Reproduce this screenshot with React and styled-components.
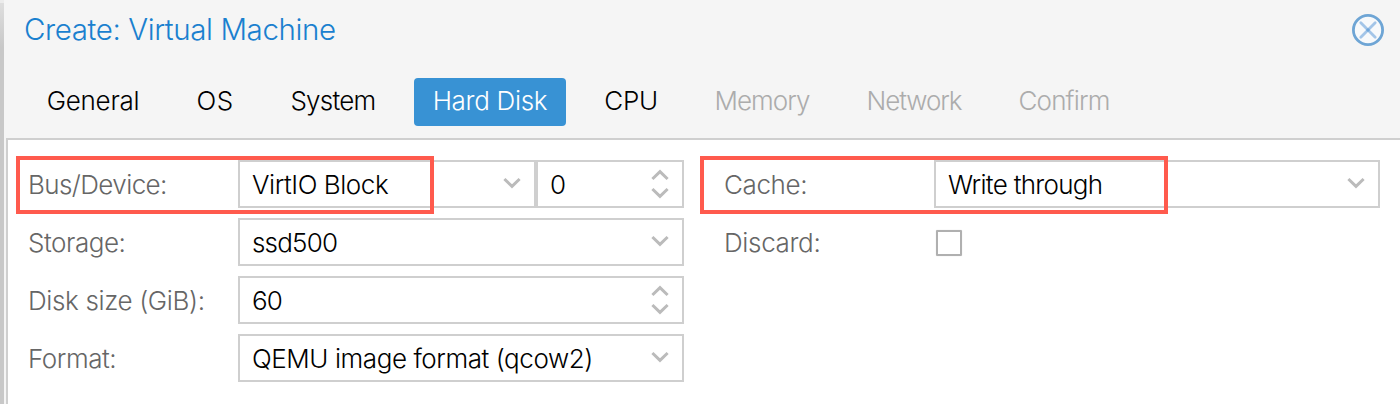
import React from "react";
import styled, { createGlobalStyle } from "styled-components";

const GlobalStyle = createGlobalStyle`
  * { box-sizing: border-box; }
  body {
    margin: 0;
    background: #fff;
    font-family: "Inter", "Liberation Sans", sans-serif;
    font-weight: 300;
  }
`;

const Page = styled.div`
  display: flex;
  width: 1400px;
  height: 404px;
  overflow: hidden;
`;

const Backdrop = styled.div`
  flex: 0 0 4px;
  border-top: 3px solid #ececec;
  background: linear-gradient(#dedede, #c8c8c8 44px);
`;

const Window = styled.div`
  flex: 1;
  display: flex;
  flex-direction: column;
  padding-left: 2px;
  background: #f5f5f5;
`;

const TitleBar = styled.header`
  display: flex;
  justify-content: space-between;
  align-items: center;
  height: 60px;
  padding: 0 16px 0 18px;
`;

const Title = styled.h1`
  margin: 0;
  height: 60px;
  font-size: 29.5px;
  font-weight: 300;
  line-height: 58px;
  letter-spacing: -0.4px;
  color: #1a80cf;
`;

const CloseButton = styled.button`
  display: flex;
  width: 32px;
  height: 32px;
  padding: 0;
  border: 0;
  background: none;
`;

const Tabs = styled.nav`
  display: flex;
  gap: 20px;
  height: 78px;
  padding: 18px 0 12px 22px;
`;

const Tab = styled.button`
  display: flex;
  justify-content: center;
  width: ${(p) => p.$width}px;
  height: 48px;
  padding: 0;
  border: 0;
  border-radius: 4px;
  font: 300 26px/46px "Inter", sans-serif;
  letter-spacing: ${(p) => p.$track}px;
  white-space: nowrap;
  background: ${(p) => (p.$active ? "#3892d4" : "transparent")};
  color: ${(p) => (p.$active ? "#fff" : p.disabled ? "#acacac" : "#000")};
`;

const Panel = styled.main`
  flex: 1;
  display: flex;
  gap: 40px;
  padding: 20px 20px 0;
  border: solid #cfcfcf;
  border-width: 2px 0 0 2px;
  background: #fff;
`;

const Column = styled.section`
  flex: 0 0 656px;
  display: flex;
  flex-direction: column;
  gap: 10px;
`;

const Row = styled.div`
  position: relative;
  display: flex;
  height: 48px;
`;

const Label = styled.label`
  flex: 0 0 210px;
  font-size: 26px;
  line-height: 50px;
  letter-spacing: ${(p) => p.$track}px;
  white-space: nowrap;
  color: #666;
`;

const Field = styled.div`
  flex: ${(p) => (p.$width ? `0 0 ${p.$width}px` : 1)};
  display: flex;
  justify-content: space-between;
  padding: 0 13px 0 12px;
  border: 2px solid #cfcfcf;
  background: #fff;
`;

const Value = styled.span`
  font-size: 26px;
  line-height: 46px;
  letter-spacing: ${(p) => p.$track}px;
  white-space: nowrap;
  color: #000;
`;

const Trigger = styled.span`
  display: flex;
  flex-direction: column;
  gap: 6px;
  padding-top: ${(p) => (p.$spinner ? 7 : 15)}px;
`;

const Checkbox = styled.span`
  width: 26px;
  height: 26px;
  margin: 12px 0 0 2px;
  border: 2px solid #b0b0b0;
  border-radius: 1px;
  box-shadow: 0 0 1px #ccc;
`;

const Highlight = styled.div`
  position: absolute;
  top: -4px;
  left: ${(p) => p.$left}px;
  width: ${(p) => p.$width}px;
  height: 58px;
  border: 4px solid #ff5a4d;
  pointer-events: none;
`;

const Chevron = ({ up }) => (
  <svg width="18" height="12" viewBox="0 0 18 12" fill="none" stroke="#bbb" strokeWidth="3">
    <path d={up ? "M1.4 10 9 2.6 16.6 10" : "M1.4 2 9 9.4 16.6 2"} />
  </svg>
);

const Combo = ({ value, track, width }) => (
  <Field $width={width}>
    <Value $track={track}>{value}</Value>
    <Trigger>
      <Chevron />
    </Trigger>
  </Field>
);

const Spinner = ({ value, track, width }) => (
  <Field $width={width}>
    <Value $track={track}>{value}</Value>
    <Trigger $spinner>
      <Chevron up />
      <Chevron />
    </Trigger>
  </Field>
);

const tabs = [
  { name: "General", width: 130, track: -0.3 },
  { name: "OS", width: 74, track: 0.3 },
  { name: "System", width: 122, track: -0.75 },
  { name: "Hard Disk", width: 152, track: -0.3, active: true },
  { name: "CPU", width: 90, track: -0.3 },
  { name: "Memory", width: 132, track: -0.95 },
  { name: "Network", width: 132, track: -1.1 },
  { name: "Confirm", width: 128, track: -0.85 },
];

export default function App() {
  return (
    <>
      <GlobalStyle />
      <Page>
        <Backdrop />
        <Window>
          <TitleBar>
            <Title>Create: Virtual Machine</Title>
            <CloseButton aria-label="Close">
              <svg width="32" height="32" viewBox="0 0 32 32">
                <circle cx="16" cy="16" r="14.6" fill="#f7f9fb" stroke="#6ea5d5" strokeWidth="2.8" />
                <path
                  d="M8.8 8.8 23.2 23.2M23.2 8.8 8.8 23.2"
                  stroke="#a3c5e8"
                  strokeWidth="2.8"
                  strokeLinecap="round"
                />
                <circle cx="16" cy="16" r="1.8" fill="#6fa6db" />
              </svg>
            </CloseButton>
          </TitleBar>
          <Tabs>
            {tabs.map((t, i) => (
              <Tab key={t.name} $width={t.width} $track={t.track} $active={t.active} disabled={i > 4}>
                {t.name}
              </Tab>
            ))}
          </Tabs>
          <Panel>
            <Column>
              <Row>
                <Label $track={-0.6}>Bus/Device:</Label>
                <Combo value="VirtIO Block" track={-0.45} width={298} />
                <Spinner value="0" track={0} width={148} />
                <Highlight $left={-12} $width={418} />
              </Row>
              <Row>
                <Label $track={-0.45}>Storage:</Label>
                <Combo value="ssd500" track={-0.8} />
              </Row>
              <Row>
                <Label $track={-0.37}>Disk size (GiB):</Label>
                <Spinner value="60" track={-0.9} />
              </Row>
              <Row>
                <Label $track={-0.45}>Format:</Label>
                <Combo value="QEMU image format (qcow2)" track={-0.43} />
              </Row>
            </Column>
            <Column>
              <Row>
                <Label $track={-0.4}>Cache:</Label>
                <Combo value="Write through" track={-0.7} />
                <Highlight $left={-24} $width={468} />
              </Row>
              <Row>
                <Label $track={-0.35}>Discard:</Label>
                <Checkbox />
              </Row>
            </Column>
          </Panel>
        </Window>
      </Page>
    </>
  );
}
